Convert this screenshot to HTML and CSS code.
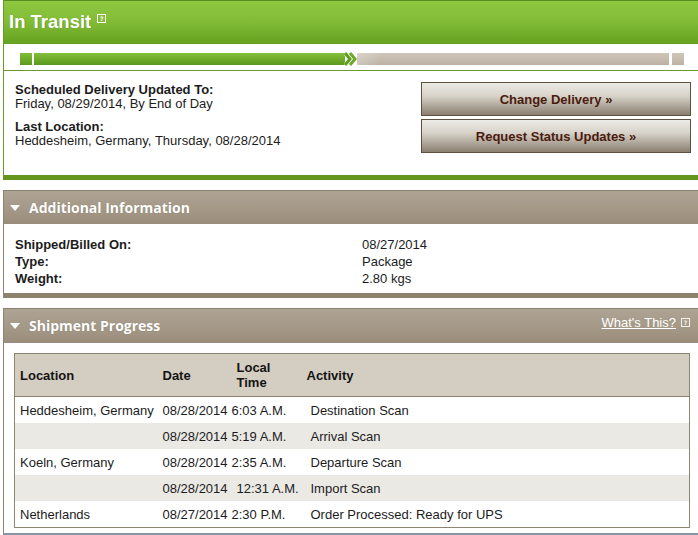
FILE: index.html
```html
<!DOCTYPE html>
<html lang="en">
<head>
<meta charset="utf-8">
<title>In Transit</title>
<link rel="stylesheet" href="styles.css">
</head>
<body>
<div class="page">
  <section class="status">
    <div class="status-head">
      <h1>In Transit</h1>
      <span class="help help-light">?</span>
    </div>
    <div class="track">
      <span class="seg seg-start"></span>
      <span class="seg seg-done"></span>
      <svg class="chev" width="14" height="16" viewBox="0 0 14 16">
        <polyline points="1,1 7,8 1,15" fill="none" stroke="#ffffff" stroke-width="5" stroke-linejoin="miter"/>
        <polyline points="6,1 12,8 6,15" fill="none" stroke="#ffffff" stroke-width="5" stroke-linejoin="miter"/>
        <polyline points="1,2 6,8 1,14" fill="none" stroke="#5f9d1f" stroke-width="3" stroke-linejoin="miter"/>
        <polyline points="6,2 11,8 6,14" fill="none" stroke="#6aaa26" stroke-width="3" stroke-linejoin="miter"/>
      </svg>
      <span class="seg seg-todo"></span>
      <span class="seg seg-end"></span>
    </div>
    <div class="status-body">
      <div class="delivery">
        <div class="fact">
          <div class="fact-label">Scheduled Delivery Updated To:</div>
          <div class="fact-value">Friday, 08/29/2014, By End of Day</div>
        </div>
        <div class="fact">
          <div class="fact-label">Last Location:</div>
          <div class="fact-value">Heddesheim, Germany,&nbsp;Thursday, 08/28/2014</div>
        </div>
      </div>
      <div class="actions">
        <a class="btn" href="#">Change Delivery »</a>
        <a class="btn" href="#">Request Status Updates »</a>
      </div>
    </div>
  </section>

  <section class="panel panel-info">
    <div class="panel-head">
      <span class="tri"></span>
      <h2>Additional Information</h2>
    </div>
    <div class="info-body">
      <div class="info-label">Shipped/Billed On:</div><div class="info-value">08/27/2014</div>
      <div class="info-label">Type:</div><div class="info-value">Package</div>
      <div class="info-label">Weight:</div><div class="info-value">2.80 kgs</div>
    </div>
  </section>

  <section class="panel panel-progress">
    <div class="panel-head">
      <span class="tri"></span>
      <h2>Shipment Progress</h2>
      <a class="whats" href="#">What's This?</a>
      <span class="help help-small">?</span>
    </div>
    <div class="progress-body">
      <table class="scans">
        <colgroup>
          <col class="c-loc"><col class="c-date"><col class="c-time"><col class="c-act">
        </colgroup>
        <thead>
          <tr>
            <th>Location</th>
            <th>Date</th>
            <th class="th-time">Local<br>Time</th>
            <th class="th-act">Activity</th>
          </tr>
        </thead>
        <tbody>
          <tr>
            <td>Heddesheim, Germany</td><td>08/28/2014</td><td class="t">6:03 A.M.</td><td class="a">Destination Scan</td>
          </tr>
          <tr class="alt">
            <td></td><td>08/28/2014</td><td class="t">5:19 A.M.</td><td class="a">Arrival Scan</td>
          </tr>
          <tr>
            <td>Koeln, Germany</td><td>08/28/2014</td><td class="t">2:35 A.M.</td><td class="a">Departure Scan</td>
          </tr>
          <tr class="alt">
            <td></td><td>08/28/2014</td><td class="t t-wide">12:31 A.M.</td><td class="a">Import Scan</td>
          </tr>
          <tr>
            <td>Netherlands</td><td>08/27/2014</td><td class="t">2:30 P.M.</td><td class="a">Order Processed: Ready for UPS</td>
          </tr>
        </tbody>
      </table>
    </div>
  </section>
</div>
</body>
</html>
```
FILE: styles.css
```css
html, body {
  margin: 0;
  padding: 0;
  overflow: hidden;
  background: #ffffff;
}
body {
  font-family: "Liberation Sans", Arial, sans-serif;
  font-size: 13px;
  color: #1c1c1c;
}
.page {
  margin-left: 3px;
  width: 697px;
}

/* ---------- status ---------- */
.status {
  border-left: 1px solid #6a9a2b;
  border-bottom: 5px solid #64961c;
}
.status-head {
  height: 43px;
  border-top: 1px solid #5a8c1e;
  background: linear-gradient(#8ec840, #83bd38 45%, #66a11f);
  display: flex;
  align-items: flex-start;
  padding-left: 5px;
}
.status-head h1 {
  margin: 10px 0 0;
  font-size: 18.5px;
  line-height: 22px;
  font-weight: bold;
  color: #ffffff;
  text-shadow: 1px 0 0 rgba(40, 70, 10, 0.25);
}
.help {
  display: flex;
  align-items: center;
  justify-content: center;
  box-sizing: border-box;
  font-family: "DejaVu Sans", sans-serif;
  font-weight: bold;
  line-height: 1;
}
.help-light {
  width: 9px;
  height: 9px;
  margin: 13px 0 0 6px;
  border: 1px solid #ffffff;
  color: #ffffff;
  font-size: 6px;
}
.track {
  height: 27px;
  box-sizing: border-box;
  padding: 8px 0 0 16px;
  display: flex;
  align-items: flex-start;
  border-bottom: 1px solid #6a9a2b;
}
.seg {
  display: block;
  height: 12px;
  margin-top: 1px;
}
.seg-start {
  width: 12px;
  background: linear-gradient(#80bd38, #5c9a1d);
}
.seg-done {
  width: 311px;
  margin-left: 2px;
  background: linear-gradient(#83c03b, #5a981c);
}
.chev {
  display: block;
  margin: -1px -1px 0 -1px;
}
.seg-todo {
  width: 312px;
  background:
    linear-gradient(to right, rgba(255, 255, 255, 0.25), rgba(255, 255, 255, 0) 24px),
    linear-gradient(#cfc6ba, #bcb2a4);
}
.seg-end {
  width: 12px;
  margin-left: 3px;
  background: linear-gradient(#cfc6ba, #bcb2a4);
}
.status-body {
  height: 104px;
  box-sizing: border-box;
  display: flex;
  justify-content: space-between;
  padding: 11px 9px 0 11px;
}
.delivery {
  padding-top: 1px;
}
.fact {
  margin-bottom: 9px;
  line-height: 14px;
}
.fact-label {
  font-weight: bold;
}
.actions {
  width: 270px;
  display: flex;
  flex-direction: column;
  gap: 3px;
}
.btn {
  display: flex;
  align-items: center;
  justify-content: center;
  height: 34px;
  box-sizing: border-box;
  border: 1px solid #5d503f;
  background: linear-gradient(#ecebe6, #d8d3ca 40%, #8a7f70);
  color: #4a1b0d;
  font-size: 13px;
  font-weight: bold;
  text-decoration: none;
}

/* ---------- panels ---------- */
.panel {
  margin-top: 10px;
  border-left: 1px solid #8f8372;
  border-top: 1px solid #8a7f70;
}
.panel-head {
  display: flex;
  align-items: center;
  padding: 0 10px 0 6px;
  background: linear-gradient(#aea494, #a49886 55%, #9a8c7b);
}
.panel-info .panel-head {
  height: 33px;
}
.panel-progress .panel-head {
  height: 34px;
  align-items: flex-start;
}
.tri {
  width: 0;
  height: 0;
  border-left: 5px solid transparent;
  border-right: 5px solid transparent;
  border-top: 6px solid #ffffff;
  margin-right: 9px;
}
.panel-progress .tri {
  margin-top: 14px;
}
.panel-head h2 {
  margin: 0;
  font-family: "Open Sans", "Liberation Sans", sans-serif;
  font-size: 14px;
  font-weight: bold;
  color: #ffffff;
  text-shadow: 0 0 1px rgba(60, 50, 40, 0.35);
}
.panel-progress h2 {
  margin-top: 7px;
}
.whats {
  margin-left: auto;
  margin-top: 6px;
  color: #ffffff;
  font-size: 13px;
  text-decoration: underline;
}
.help-small {
  width: 9px;
  height: 9px;
  margin: 9px 0 0 5px;
  border: 1px solid #f4f1ec;
  color: #f4f1ec;
  font-size: 6px;
}

.info-body {
  display: grid;
  grid-template-columns: 347px 1fr;
  padding: 12px 0 6px 11px;
  line-height: 17px;
  border-bottom: 5px solid #8f8170;
}
.info-label {
  font-weight: bold;
}

.panel-progress {
  border-bottom: 2px solid #8496a8;
}
.progress-body {
  padding: 10px 10px 5px 10px;
}
.scans {
  width: 100%;
  border-collapse: collapse;
  border: 1px solid #8f8372;
  table-layout: fixed;
}
.c-loc { width: 143px; }
.c-date { width: 74px; }
.c-time { width: 74px; }
.scans th {
  height: 42px;
  padding: 0 0 0 5px;
  background: #d4cdc1;
  text-align: left;
  font-size: 13px;
  line-height: 15px;
  font-weight: bold;
  color: #141414;
  border-bottom: 1px solid #8f8372;
  vertical-align: middle;
}
.scans th.th-act {
  padding-left: 1px;
}
.scans td {
  height: 26px;
  padding: 0 0 0 5px;
  white-space: nowrap;
  vertical-align: middle;
}
.scans td.t {
  padding-left: 0;
}
.scans td.t-wide {
  padding-left: 5px;
}
.scans tr.alt td {
  background: #eae9e4;
}
```
